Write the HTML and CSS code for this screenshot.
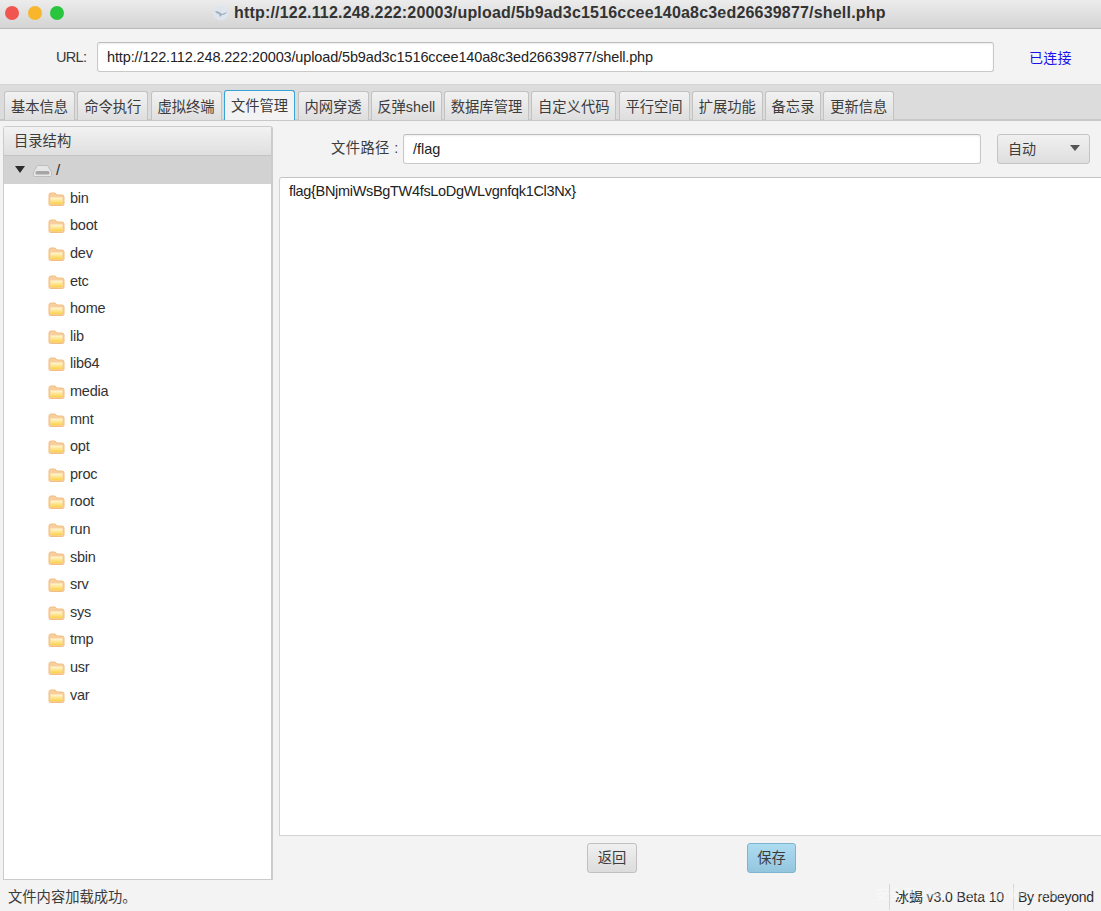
FILE: index.html
```html
<!DOCTYPE html>
<html lang="zh">
<head>
<meta charset="utf-8">
<title>shell.php</title>
<link rel="stylesheet" href="styles.css">
</head>
<body>
<div class="window">
  <header class="titlebar">
    <div class="lights"><span class="light red"></span><span class="light yellow"></span><span class="light green"></span></div>
    <div class="title">
      <svg class="app-icon" width="16" height="16" viewBox="0 0 16 16"><circle cx="8" cy="8" r="7.5" fill="#dfe5ec"/><path d="M2 6c3 0 5 1 7 3l5-2c-1 2-3 3-5 3l-2 2-1-3C4 9 3 8 2 6z" fill="#9fb0c0"/></svg>
      <span>http://122.112.248.222:20003/upload/5b9ad3c1516ccee140a8c3ed26639877/shell.php</span>
    </div>
  </header>
  <div class="urlbar">
    <label class="url-label">URL:</label>
    <div class="field url-field">http://122.112.248.222:20003/upload/5b9ad3c1516ccee140a8c3ed26639877/shell.php</div>
    <span class="conn">已连接</span>
  </div>
  <nav class="tabs">
    <div class="tab w71">基本信息</div>
    <div class="tab w71">命令执行</div>
    <div class="tab w71">虚拟终端</div>
    <div class="tab w71 active">文件管理</div>
    <div class="tab w71">内网穿透</div>
    <div class="tab w71">反弹shell</div>
    <div class="tab w85">数据库管理</div>
    <div class="tab w85">自定义代码</div>
    <div class="tab w71">平行空间</div>
    <div class="tab w71">扩展功能</div>
    <div class="tab w56">备忘录</div>
    <div class="tab w71">更新信息</div>
  </nav>
  <main class="main">
    <aside class="tree">
      <div class="tree-head">目录结构</div>
      <div class="root-row">
        <span class="arrow"></span>
        <svg class="drive" width="19" height="12" viewBox="0 0 19 12"><path d="M4.500 .5h10l4 6.500v3.500q0 1-1 1h-16q-1 0-1-1V7z" fill="#e6e6e6" stroke="#bdbdbd"/><rect x="2.500" y="6" width="14" height="3.500" rx="1.500" fill="#a6a6a6"/></svg>
        <span class="root-name">/</span>
      </div>
      <ul class="dirs">
        <li><svg class="folder"><use href="#fld"/></svg>bin</li>
        <li><svg class="folder"><use href="#fld"/></svg>boot</li>
        <li><svg class="folder"><use href="#fld"/></svg>dev</li>
        <li><svg class="folder"><use href="#fld"/></svg>etc</li>
        <li><svg class="folder"><use href="#fld"/></svg>home</li>
        <li><svg class="folder"><use href="#fld"/></svg>lib</li>
        <li><svg class="folder"><use href="#fld"/></svg>lib64</li>
        <li><svg class="folder"><use href="#fld"/></svg>media</li>
        <li><svg class="folder"><use href="#fld"/></svg>mnt</li>
        <li><svg class="folder"><use href="#fld"/></svg>opt</li>
        <li><svg class="folder"><use href="#fld"/></svg>proc</li>
        <li><svg class="folder"><use href="#fld"/></svg>root</li>
        <li><svg class="folder"><use href="#fld"/></svg>run</li>
        <li><svg class="folder"><use href="#fld"/></svg>sbin</li>
        <li><svg class="folder"><use href="#fld"/></svg>srv</li>
        <li><svg class="folder"><use href="#fld"/></svg>sys</li>
        <li><svg class="folder"><use href="#fld"/></svg>tmp</li>
        <li><svg class="folder"><use href="#fld"/></svg>usr</li>
        <li><svg class="folder"><use href="#fld"/></svg>var</li>
      </ul>
    </aside>
    <section class="editor">
      <div class="pathbar">
        <span class="path-label">文件路径 :</span>
        <div class="field path-field">/flag</div>
        <div class="select"><span>自动</span><span class="caret"></span></div>
      </div>
      <div class="content">flag{BNjmiWsBgTW4fsLoDgWLvgnfqk1Cl3Nx}</div>
      <div class="actions">
        <button class="btn">返回</button>
        <button class="btn primary">保存</button>
      </div>
    </section>
  </main>
  <footer class="status">
    <span class="status-msg">文件内容加载成功。</span>
    <span class="status-ver">冰蝎 v3.0 Beta 10</span>
    <span class="status-by">By rebeyond</span>
    <span class="watermark">安全客（www.anquanke.com）</span>
  </footer>
</div>
<svg class="defs" width="0" height="0">
  <defs>
    <linearGradient id="fg" x1="0" y1="0" x2="0" y2="1"><stop offset="0" stop-color="#fff8d6"/><stop offset="1" stop-color="#fcd044"/></linearGradient>
    <symbol id="fld" viewBox="0 0 17 14">
      <path d="M1 3q0-2 2-2h4l2 2h5q2 0 2 2v7q0 1.500-1.500 1.500h-12Q1 13.500 1 12z" fill="#f8cf9c" stroke="#f2bd80"/>
      <path d="M2.500 5.500h12v6q0 .8-.8.8H3.300q-.8 0-.8-.8z" fill="url(#fg)"/>
    </symbol>
  </defs>
</svg>
</body>
</html>
```
FILE: styles.css
```css
* { box-sizing: border-box; }
html, body { margin: 0; height: 100%; }
body {
  width: 1101px;
  height: 911px;
  overflow: hidden;
  font-family: "Liberation Sans", "Noto Sans CJK SC", sans-serif;
  font-size: 14.5px;
  color: #2b2b2b;
  background: #f3f3f3;
}
.window { display: flex; flex-direction: column; height: 911px; position: relative; }
.defs { position: absolute; }

.titlebar {
  height: 29px;
  flex: none;
  display: flex;
  align-items: center;
  padding-bottom: 2px;
  position: relative;
  background: linear-gradient(#ececec, #d4d4d4);
  border-bottom: 1px solid #b9b9b9;
}
.lights { display: flex; gap: 8.500px; padding-left: 5px; }
.light { width: 14px; height: 14px; border-radius: 50%; }
.red { background: #f0564f; }
.yellow { background: #f8b62d; }
.green { background: #2ac53f; }
.title {
  position: absolute;
  left: 213px;
  top: 4px;
  display: flex;
  align-items: center;
  gap: 5px;
  font-weight: 700;
  font-size: 16px;
  letter-spacing: 0.19px;
  color: #333;
}
.app-icon { flex: none; }

.urlbar {
  height: 55px;
  flex: none;
  display: flex;
  align-items: center;
  padding-top: 1px;
  background: #f3f3f3;
}
.url-label { margin-left: 56px; width: 41px; color: #3a3a3a; letter-spacing: -.7px; }
.field {
  background: #fff;
  border: 1px solid #c9c9c9;
  border-top-color: #bcbcbc;
  border-radius: 3px;
  box-shadow: inset 0 1px 2px rgba(0,0,0,.08);
  display: flex;
  align-items: center;
  color: #222;
  padding-left: 9px;
  height: 30px;
}
.url-field { width: 897px; letter-spacing: -.14px; }
.conn { margin-left: 35px; color: #1a10ee; font-size: 14px; letter-spacing: .2px; }

.tabs {
  height: 37px;
  flex: none;
  display: flex;
  align-items: flex-end;
  gap: 2.250px;
  padding-left: 4px;
  background: #dcdcdc;
  border-top: 1px solid #d4d4d4;
  border-bottom: 2px solid #c8c8c8;
}
.tab {
  height: 29px;
  margin-bottom: -1px;
  padding-bottom: 2px;
  display: flex;
  align-items: center;
  justify-content: center;
  background: linear-gradient(#f2f2f2, #dedede);
  border: 1px solid #c2c2c2;
  border-bottom: none;
  border-radius: 3px 3px 0 0;
  font-size: 14.300px;
  color: #3c3c3c;
}
.w71 { width: 71px; }
.w85 { width: 85px; }
.w56 { width: 56px; }
.tab.active {
  background: #f3f3f3;
  border: 1px solid #39a3d8;
  border-bottom: none;
  height: 30px;
  width: 71.500px;
}

.main { flex: 1; min-height: 0; display: flex; background: #f3f3f3; }

.tree {
  width: 270px;
  margin: 5px 0 3px 3px;
  flex: none;
  background: #fff;
  border: 1px solid #cbcbcb;
  border-top-left-radius: 3px;
  border-top-right-radius: 3px;
  border-width: 1px 2px 1px 1px;
  display: flex;
  flex-direction: column;
}
.tree-head {
  height: 28.500px;
  flex: none;
  display: flex;
  align-items: center;
  padding-left: 10px;
  padding-bottom: 2px;
  background: linear-gradient(#f2f2f2, #dfdfdf);
  border-bottom: 1px solid #c4c4c4;
  font-size: 14.300px;
  color: #3c3c3c;
}
.root-row {
  height: 28.600px;
  flex: none;
  display: flex;
  align-items: center;
  background: #d2d2d2;
}
.arrow {
  width: 0; height: 0;
  margin-left: 11px;
  border-left: 5px solid transparent;
  border-right: 5px solid transparent;
  border-top: 7px solid #2b2b2b;
}
.drive { margin: 3px 4px 0 8px; }
.root-name { font-size: 15px; }
.dirs { list-style: none; margin: 0; padding: 0; }
.dirs li {
  height: 27.600px;
  display: flex;
  align-items: center;
  padding-left: 44px;
  color: #333;
  letter-spacing: -.25px;
}
.folder { width: 17px; height: 14px; margin-right: 5px; position: relative; top: 1px; }

.editor { flex: 1; min-width: 0; display: flex; flex-direction: column; padding-left: 6px; }
.pathbar { height: 56px; flex: none; display: flex; align-items: flex-start; padding-top: 13px; }
.path-label { width: 72px; margin-left: 52px; line-height: 29px; font-size: 14.300px; letter-spacing: .4px; color: #3c3c3c; white-space: nowrap; }
.path-field { width: 578px; height: 30px; }
.select {
  width: 93px;
  height: 30px;
  margin-left: 16px;
  padding: 0 9px 2px 10px;
  display: flex;
  align-items: center;
  justify-content: space-between;
  background: linear-gradient(#f0f0f0, #dedede);
  border: 1px solid #c4c4c4;
  border-radius: 3px;
  font-size: 14px;
  color: #3c3c3c;
}
.caret { width: 0; height: 0; border-left: 5px solid transparent; border-right: 5px solid transparent; border-top: 6px solid #555; }
.content {
  flex: 1;
  min-height: 0;
  background: #fff;
  border: 1px solid #d2d2d2;
  border-top: 1px solid #c4c4c4;
  border-right: none;
  border-top-left-radius: 3px;
  padding: 5px 9px;
  line-height: 17px;
  letter-spacing: -.32px;
  color: #222;
}
.actions { height: 47px; flex: none; display: flex; align-items: flex-start; padding: 7px 0 0 308px; gap: 110px; }
.btn {
  width: 50px;
  height: 30px;
  font: inherit;
  font-size: 14.300px;
  color: #3c3c3c;
  background: linear-gradient(#f0f0f0, #dcdcdc);
  border: 1px solid #c0c0c0;
  border-radius: 3px;
  padding: 0 0 4px;
}
.btn.primary { width: 49px; background: linear-gradient(#aedcf2, #93c6de); border-color: #7fb4cf; }

.status {
  height: 28px;
  flex: none;
  display: flex;
  align-items: center;
  position: relative;
  background: #f3f3f3;
}
.status-msg { margin-left: 8px; flex: 1; padding-bottom: 3px; font-size: 14.300px; color: #3c3c3c; }
.status-ver { width: 124px; height: 26px; line-height: 26px; padding-left: 5px; border-left: 1px solid #d6d6d6; font-size: 14px; letter-spacing: -.1px; white-space: nowrap; }
.status-by { width: 88px; height: 26px; line-height: 26px; padding-left: 4px; border-left: 1px solid #d6d6d6; font-size: 14px; letter-spacing: -.25px; white-space: nowrap; }
.watermark {
  position: absolute;
  left: 875px;
  top: 2px;
  font-size: 14px;
  line-height: 18px;
  color: #fff;
  opacity: .45;
  white-space: nowrap;
}
```
